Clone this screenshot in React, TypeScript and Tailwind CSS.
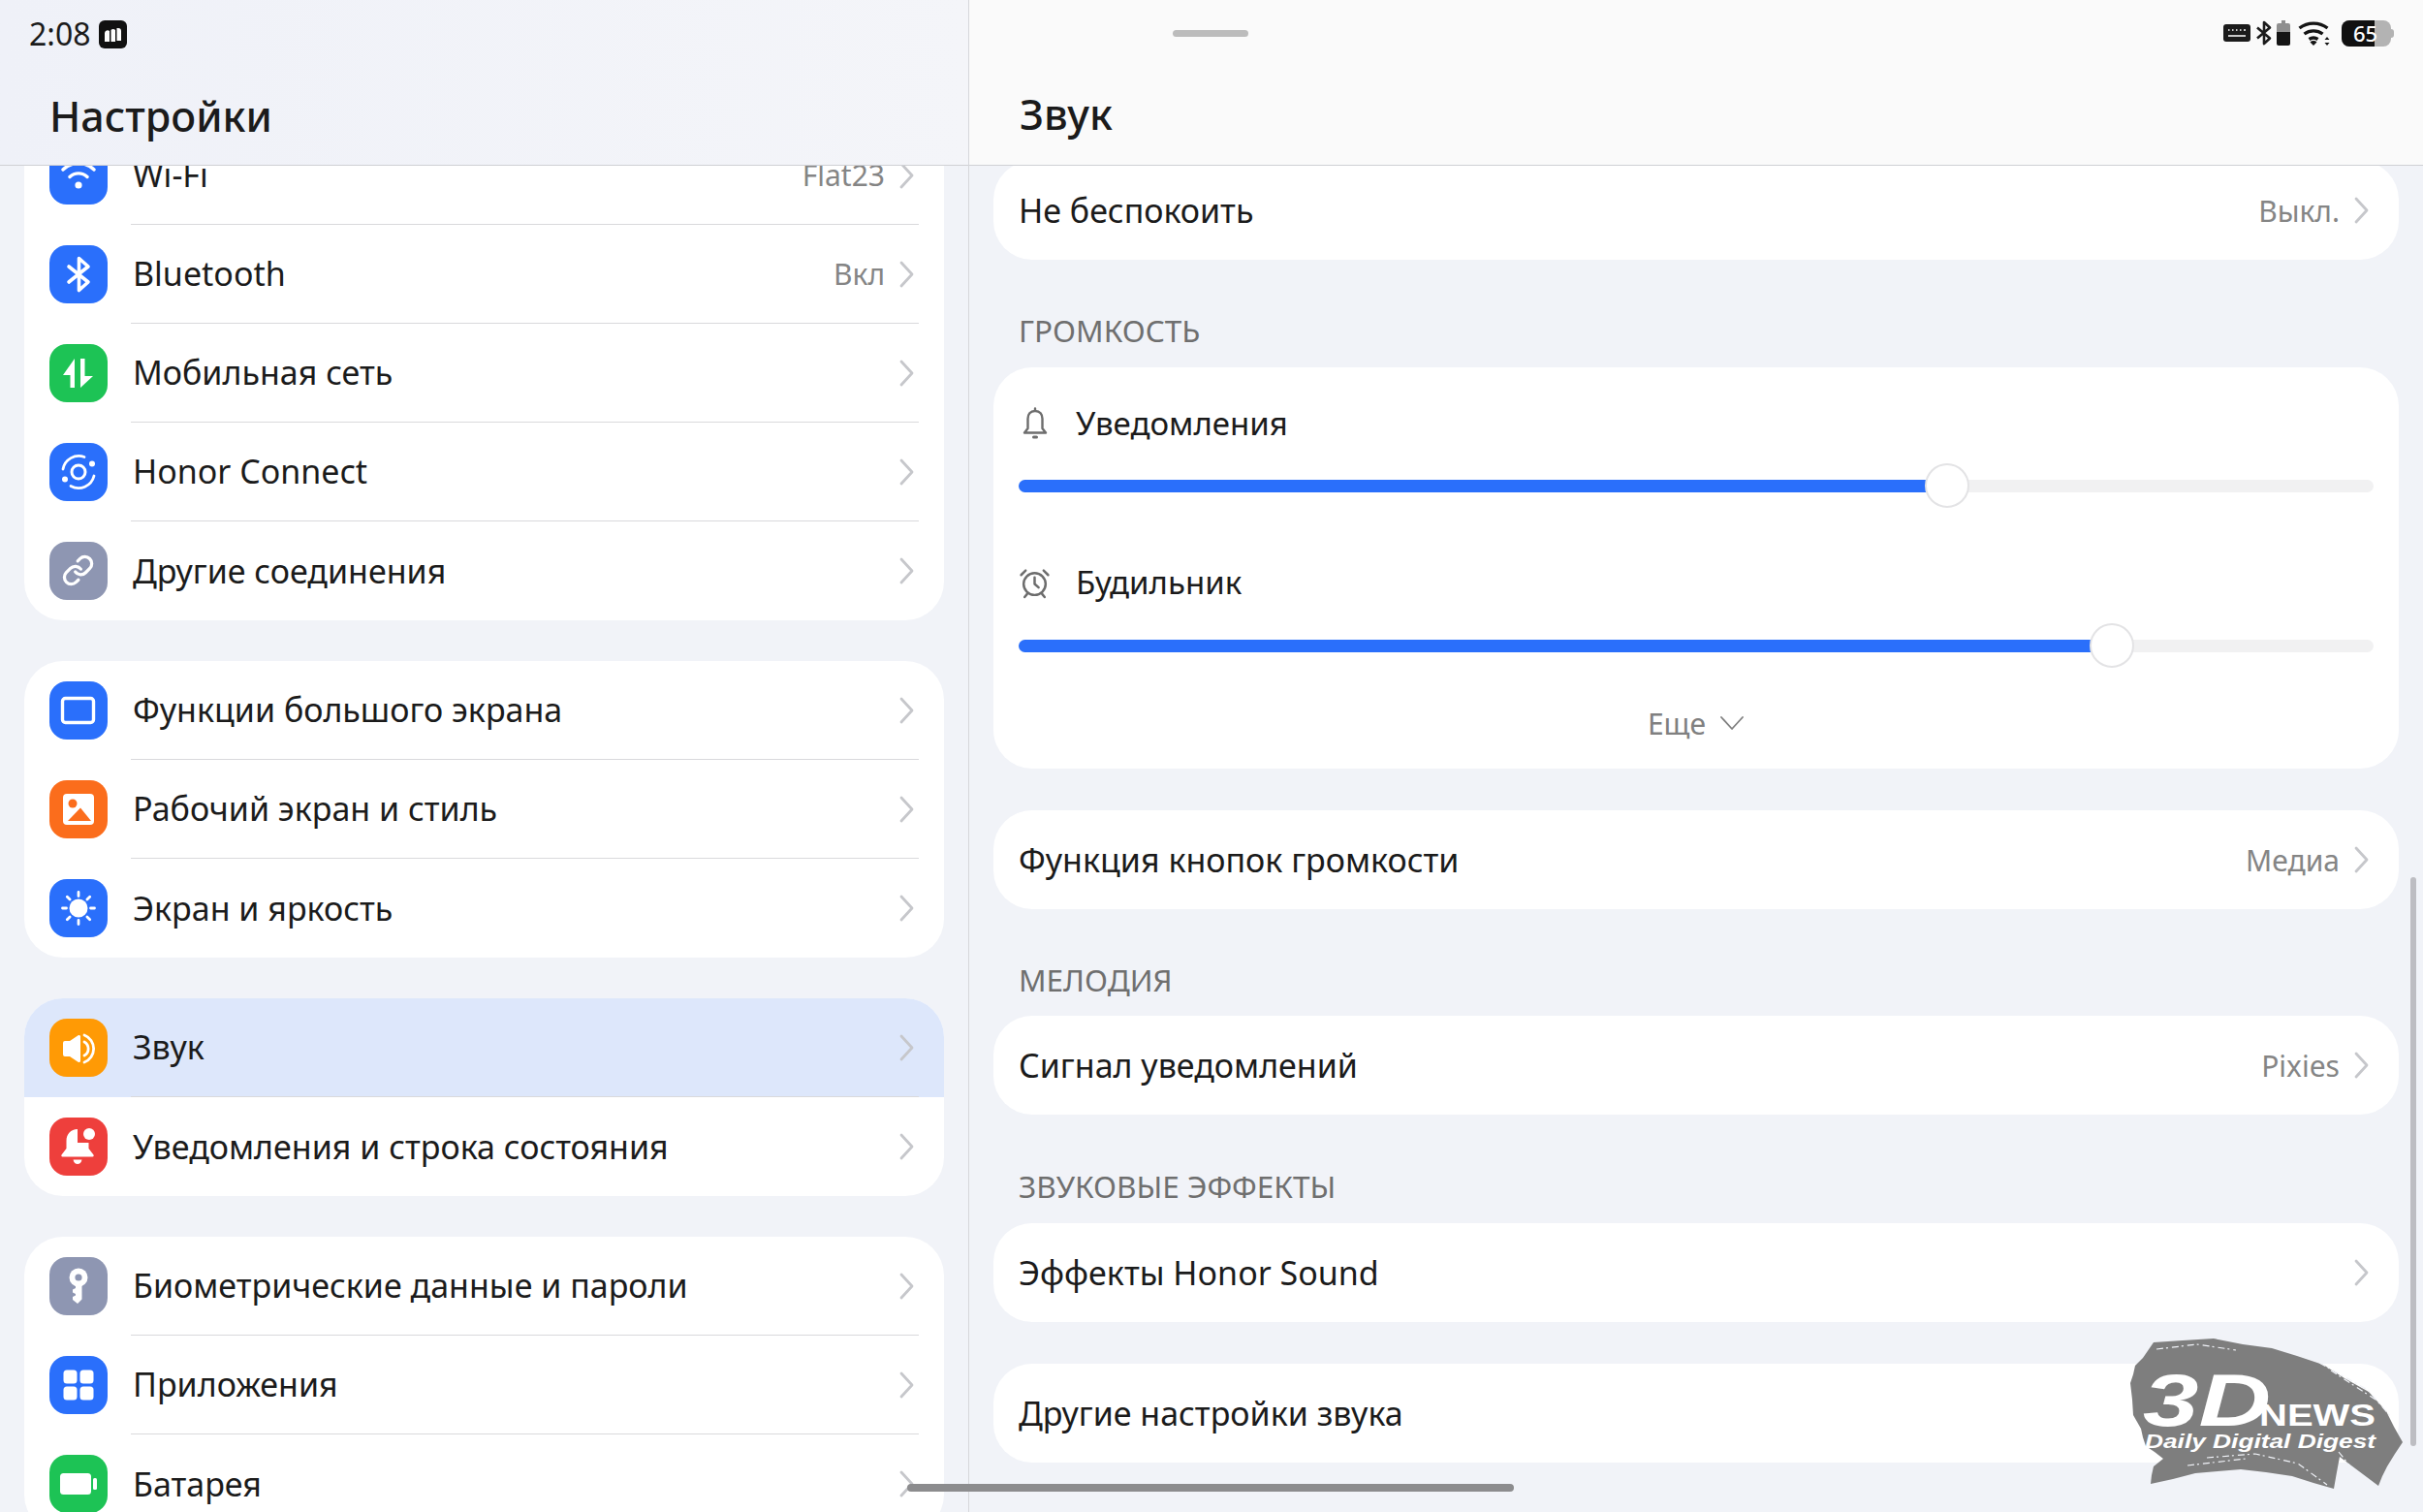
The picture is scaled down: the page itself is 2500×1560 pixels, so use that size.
import React from 'react';

const BLUE = 'bg-[#2a6ffb]';
const GREEN = 'bg-[#1dc355]';
const GRAY = 'bg-[#8e96b2]';

const glyph = (children: React.ReactNode) => (
  <svg viewBox="0 0 60 60" className="w-[60px] h-[60px]" fill="none">
    {children}
  </svg>
);

const icons = {
  wifi: glyph(
    <>
      <circle cx="30" cy="40" r="3.6" fill="#fff" />
      <path d="M21 31.5a13 13 0 0 1 18 0M14 24a23 23 0 0 1 32 0" stroke="#fff" strokeWidth="3.4" strokeLinecap="round" />
    </>,
  ),
  bluetooth: glyph(
    <path d="M20 22l20 16-9.5 8.5v-33L40 22 20 38" stroke="#fff" strokeWidth="3.6" strokeLinecap="round" strokeLinejoin="round" />,
  ),
  mobile: glyph(<path d="M26 15v30h-4.500V32H14zM32 15h4.500v18H45L32 45z" fill="#fff" />),
  honor: glyph(
    <>
      <circle cx="30" cy="30" r="7" stroke="#fff" strokeWidth="3" />
      <path d="M14 27a16.500 16.500 0 0 1 22-12.500M46 34a16.500 16.500 0 0 1-24 10.500" stroke="#fff" strokeWidth="2.800" strokeLinecap="round" />
      <circle cx="44" cy="21.500" r="3" fill="#fff" />
      <circle cx="16" cy="37.500" r="3" fill="#fff" />
    </>,
  ),
  link: glyph(
    <g transform="translate(12.500 12.500) scale(1.42)" stroke="#fff" strokeWidth="2.300" strokeLinecap="round" strokeLinejoin="round">
      <path d="M10 13a5 5 0 0 0 7.540.54l3-3a5 5 0 0 0-7.070-7.070l-1.720 1.710" />
      <path d="M14 11a5 5 0 0 0-7.540-.54l-3 3a5 5 0 0 0 7.070 7.070l1.710-1.710" />
    </g>,
  ),
  screen: glyph(<rect x="13.500" y="17.500" width="32" height="25" rx="3" stroke="#fff" strokeWidth="3.400" />),
  wallpaper: glyph(
    <>
      <rect x="14" y="14" width="32" height="32" rx="4" fill="#fff" />
      <circle cx="24" cy="24" r="4.500" fill="#fb6d1c" />
      <path d="M19 42l13-13.500L43 42z" fill="#fb6d1c" />
    </>,
  ),
  sun: glyph(
    <>
      <circle cx="30" cy="30" r="9.500" fill="#fff" />
      <path
        d="M30 13.500v4M30 42.500v4M13.500 30h4M42.500 30h4M18.300 18.300l2.800 2.800M38.900 38.900l2.800 2.800M18.300 41.700l2.800-2.800M38.900 21.100l2.800-2.800"
        stroke="#fff"
        strokeWidth="2.800"
        strokeLinecap="round"
      />
    </>,
  ),
  sound: glyph(
    <>
      <path d="M14 25a2 2 0 0 1 2-2h5l9-6a1.500 1.500 0 0 1 2 1.500v25a1.500 1.500 0 0 1-2 1.500l-9-6h-5a2 2 0 0 1-2-2z" fill="#fff" />
      <path d="M36 24a8 8 0 0 1 0 14M36 17a15 15 0 0 1 0 28" stroke="#fff" strokeWidth="2.800" strokeLinecap="round" />
    </>,
  ),
  bell: glyph(
    <>
      <path d="M29 12c-7 0-11.500 5-11.500 12v8l-5 6.500c-.5 1 0 2 1 2h31c1 0 1.500-1 1-2l-5-6.500v-6H29z" fill="#fff" />
      <path d="M24.500 43.500h9c-.5 3-2.500 4.500-4.500 4.500s-4-1.500-4.500-4.500z" fill="#fff" />
      <circle cx="41" cy="17" r="8.500" fill="#ee3f3c" />
      <circle cx="41" cy="17" r="6" fill="#fff" />
    </>,
  ),
  key: glyph(
    <>
      <circle cx="30" cy="21" r="9.500" fill="#fff" />
      <circle cx="30" cy="21" r="3.600" fill="#8e96b2" />
      <path d="M27 28h6.500v15.500L29 48l-5-4v-3l3-1.500V38l-3-1.500v-3l3-1.500z" fill="#fff" />
    </>,
  ),
  apps: glyph(
    <>
      <rect x="14.500" y="14.500" width="14" height="14" rx="3.500" fill="#fff" />
      <rect x="31.500" y="14.500" width="14" height="14" rx="3.500" fill="#fff" />
      <rect x="14.500" y="31.500" width="14" height="14" rx="3.500" fill="#fff" />
      <rect x="31.500" y="31.500" width="14" height="14" rx="3.500" fill="#fff" />
    </>,
  ),
  battery: glyph(
    <>
      <rect x="11" y="19" width="32" height="22" rx="3.500" fill="#fff" />
      <rect x="45" y="24" width="4" height="12" rx="1.500" fill="#fff" />
    </>,
  ),
};

type RowData = { icon: keyof typeof icons; color: string; label: string; value?: string; active?: boolean };

const groups: RowData[][] = [
  [
    { icon: 'wifi', color: BLUE, label: 'Wi-Fi', value: 'Flat23' },
    { icon: 'bluetooth', color: BLUE, label: 'Bluetooth', value: 'Вкл' },
    { icon: 'mobile', color: GREEN, label: 'Мобильная сеть' },
    { icon: 'honor', color: BLUE, label: 'Honor Connect' },
    { icon: 'link', color: GRAY, label: 'Другие соединения' },
  ],
  [
    { icon: 'screen', color: BLUE, label: 'Функции большого экрана' },
    { icon: 'wallpaper', color: 'bg-[#fb6d1c]', label: 'Рабочий экран и стиль' },
    { icon: 'sun', color: BLUE, label: 'Экран и яркость' },
  ],
  [
    { icon: 'sound', color: 'bg-[#ff9a05]', label: 'Звук', active: true },
    { icon: 'bell', color: 'bg-[#ee3f3c]', label: 'Уведомления и строка состояния' },
  ],
  [
    { icon: 'key', color: GRAY, label: 'Биометрические данные и пароли' },
    { icon: 'apps', color: BLUE, label: 'Приложения' },
    { icon: 'battery', color: GREEN, label: 'Батарея' },
  ],
];

function Chevron() {
  return (
    <svg viewBox="0 0 15 28" className="w-[15px] h-[28px] shrink-0" fill="none">
      <path d="M2 2l11 12L2 26" stroke="#c6c7cb" strokeWidth="2.800" strokeLinecap="round" strokeLinejoin="round" />
    </svg>
  );
}

function MenuRow({ row, last }: { row: RowData; last: boolean }) {
  return (
    <div className={`flex items-center h-[102px] pl-[26px] pr-[26px] ${row.active ? 'bg-[#dde7fb]' : ''}`}>
      <div className={`w-[60px] h-[60px] rounded-[18px] shrink-0 ${row.color}`}>{icons[row.icon]}</div>
      <div className={`flex items-center flex-1 h-full ml-[24px] pr-[5px] pl-[2px] ${last ? '' : 'border-b border-[#d9d9dc]'}`}>
        <span className="flex-1 text-[34px] text-[#1b1b1b]">{row.label}</span>
        {row.value && <span className="text-[30px] text-[#858585] mr-[15px]">{row.value}</span>}
        <Chevron />
      </div>
    </div>
  );
}

function SoundRow({ label, value, className = '' }: { label: string; value?: string; className?: string }) {
  return (
    <div className={`flex items-center h-[102px] pl-[26px] pr-[31px] bg-white rounded-[40px] ${className}`}>
      <span className="flex-1 text-[34px] text-[#1b1b1b]">{label}</span>
      {value && <span className="text-[30px] text-[#858585] mr-[15px]">{value}</span>}
      <Chevron />
    </div>
  );
}

function SectionLabel({ text }: { text: string }) {
  return <div className="flex items-center h-[60px] pl-[26px] text-[31.5px] text-[#6f6f6f]">{text}</div>;
}

function VolumeSlider({ percent }: { percent: number }) {
  return (
    <div className="relative h-[13px] rounded-full bg-[#f1f1f2]">
      <div className="h-full rounded-full bg-[#2a6ffb]" style={{ width: `${percent}%` }} />
      <div
        className="absolute top-[-17px] ml-[-23px] w-[46px] h-[46px] rounded-full bg-white border-2 border-[#e3e3e5]"
        style={{ left: `${percent}%` }}
      />
    </div>
  );
}

function BellOutline() {
  return (
    <svg viewBox="0 0 30 34" className="w-[30px] h-[34px] ml-[2px]" fill="none" stroke="#6d6d6d" strokeWidth="2.400" strokeLinecap="round" strokeLinejoin="round">
      <path d="M15 4c-5 0-7.500 3.500-7.500 8v10L4 26.500h22L22.500 22V12c0-4.500-2.500-8-7.500-8zM15 1.500V4" />
      <path d="M13.500 31h3" strokeWidth="3" />
    </svg>
  );
}

function AlarmOutline() {
  return (
    <svg viewBox="0 0 32 32" className="w-[33px] h-[33px]" fill="none" stroke="#6d6d6d" strokeWidth="2.400" strokeLinecap="round" strokeLinejoin="round">
      <circle cx="16" cy="17" r="11" />
      <path d="M16 10.500V17l4 3.500M2.500 8L7 3.500M29.500 8L25 3.500M6 30l2.500-3M26 30l-2.500-3" />
    </svg>
  );
}

function StatusIcons() {
  return (
    <div className="flex items-center ml-auto mr-[30px]">
      <svg viewBox="0 0 28 18" className="w-[28px] h-[18px]">
        <rect width="28" height="18" rx="3" fill="#1b1b1b" />
        <path d="M5 6h1.500M9 6h1.500M13 6h1.500M17 6h1.500M21 6h2M5 12h18" stroke="#fff" strokeWidth="1.600" />
      </svg>
      <svg viewBox="0 0 18 26" className="w-[18px] h-[26px] ml-[5px]" fill="none">
        <path d="M2 7.500l13 11L9 24V2l6 5.500-13 11" stroke="#1b1b1b" strokeWidth="2.600" strokeLinejoin="round" />
      </svg>
      <svg viewBox="0 0 14 26" className="w-[14px] h-[26px] ml-[4px]">
        <path d="M5 0h4v3h3a2 2 0 0 1 2 2v8H0V5a2 2 0 0 1 2-2h3z" fill="#8f8f8f" />
        <path d="M0 12h14v12a2 2 0 0 1-2 2H2a2 2 0 0 1-2-2z" fill="#141414" />
      </svg>
      <svg viewBox="0 0 35 26" className="w-[35px] h-[26px] ml-[8px]" fill="none">
        <path d="M1.500 8a24 24 0 0 1 29 0M6.500 14a16 16 0 0 1 19 0M11.500 19.500a8 8 0 0 1 9 0" stroke="#141414" strokeWidth="3.400" />
        <path d="M16 26l-3.500-3.500a5 5 0 0 1 7 0z" fill="#141414" />
        <path d="M30 17l2.500 3h-5zM30 26l2.500-3h-5z" fill="#141414" />
      </svg>
      <div className="relative flex w-[51px] h-[27px] ml-[10px] rounded-[8px] overflow-hidden bg-[#b3b3b3]">
        <div className="w-[34px] h-full bg-[#111111]" />
        <span className="absolute left-[12px] top-0 text-[22px] leading-[27px] font-medium text-white">65</span>
      </div>
      <div className="w-[3px] h-[9px] rounded-r-full bg-[#b3b3b3]" />
    </div>
  );
}

function Watermark() {
  return (
    <svg viewBox="0 0 290 165" className="absolute left-[2197px] top-[1378px] w-[290px] h-[165px]">
      <path
        d="M25 7l30-2 32-2 30 6 30 4 26 8 27 9 22 14 25 14 9 10 9 10 8 16 9 16-8 12-8 13-5 10-4 10-20-15-20-15-3 16-3 17-21-6-22-7-27-4-26-3-24 2-23 2-23 6-23 5 1-9 2-9 10-8-9-7-9-6-3-9-2-9-4-7-4-7-1-16-2-17 3-9 2-9 8-8z"
        fill="#7a7a7a"
        fillOpacity="0.97"
      />
      <g stroke="#f1f3f8" strokeWidth="1.200" strokeDasharray="7 3 2 4" fill="none">
        <path d="M28 14l42-5 40 6" />
        <path d="M196 28l50 28 24 28" />
        <path d="M208 36l46 30" />
        <path d="M80 126l50-4 44 10 30 22" />
        <path d="M60 134l60-7" />
        <path d="M216 120l24 30" />
      </g>
      <text x="14" y="93" fill="#fff" fontFamily="Liberation Sans, sans-serif" fontWeight="700" fontStyle="italic" fontSize="76" textLength="132" lengthAdjust="spacingAndGlyphs">
        3D
      </text>
      <text x="134" y="93" fill="#fff" fontFamily="Liberation Sans, sans-serif" fontWeight="700" fontSize="31" textLength="120" lengthAdjust="spacingAndGlyphs">
        NEWS
      </text>
      <text x="16" y="116" fill="#fff" fontFamily="Liberation Sans, sans-serif" fontWeight="700" fontStyle="italic" fontSize="21" textLength="238" lengthAdjust="spacingAndGlyphs">
        Daily Digital Digest
      </text>
    </svg>
  );
}

export default function App() {
  return (
    <div className="relative flex w-[2500px] h-[1560px] overflow-hidden bg-[#f1f3f8] font-['Noto_Sans',sans-serif]">
      <aside className="flex flex-col w-[1000px] h-full shrink-0 border-r border-[#d6d7db]">
        <header className="relative z-10 h-[171px] shrink-0 bg-linear-to-r from-[#eff1f8] to-[#f4f5f9] border-b border-[#cfd0d4]">
          <div className="flex items-center h-[70px] pl-[30px]">
            <span className="text-[32px] text-[#1b1b1b]">2:08</span>
            <svg viewBox="0 0 29 29" className="w-[29px] h-[29px] ml-[8px]">
              <rect width="29" height="29" rx="6" fill="#111111" />
              <path d="M6 13a3 3 0 0 1 5-2v11H6zM12.500 10a3 3 0 0 1 4.500 0v12h-4.500zM18.500 8h1.500a3 3 0 0 1 3 3v10h-4.500z" fill="#fff" />
            </svg>
          </div>
          <h1 className="flex items-center h-[100px] pl-[51px] text-[43px] font-medium text-[#1b1b1b]">Настройки</h1>
        </header>
        <div className="flex-1 min-h-0 overflow-hidden">
          <div className="flex flex-col gap-[42px] px-[25px] mt-[-41px]">
            {groups.map((group, i) => (
              <div key={i} className="bg-white rounded-[40px] overflow-hidden">
                {group.map((row, j) => (
                  <MenuRow key={row.label} row={row} last={j === group.length - 1} />
                ))}
              </div>
            ))}
          </div>
        </div>
      </aside>

      <main className="flex flex-col flex-1 h-full min-w-0">
        <header className="relative z-10 h-[171px] shrink-0 bg-[#fafafa] border-b border-[#cfd0d4]">
          <div className="flex items-center h-[68px]">
            <div className="w-[78px] h-[7px] ml-[210px] rounded-full bg-[#bcbcbc]" />
            <StatusIcons />
          </div>
          <h2 className="flex items-center h-[100px] pl-[52px] text-[43px] font-medium text-[#1b1b1b]">Звук</h2>
        </header>
        <div className="flex-1 min-h-0 overflow-hidden">
          <div className="flex flex-col px-[25px] mt-[-5px]">
            <SoundRow label="Не беспокоить" value="Выкл." />
            <div className="mt-[43px] mb-[8px]">
              <SectionLabel text="ГРОМКОСТЬ" />
            </div>
            <div className="flex flex-col h-[414px] px-[26px] pt-[28px] bg-white rounded-[40px]">
              <div className="flex items-center h-[60px]">
                <div className="w-[59px] shrink-0">
                  <BellOutline />
                </div>
                <span className="text-[33px] text-[#1b1b1b]">Уведомления</span>
              </div>
              <div className="mt-[28px]">
                <VolumeSlider percent={68.500} />
              </div>
              <div className="flex items-center h-[60px] mt-[63px]">
                <div className="w-[59px] shrink-0">
                  <AlarmOutline />
                </div>
                <span className="text-[33px] text-[#1b1b1b]">Будильник</span>
              </div>
              <div className="mt-[29px]">
                <VolumeSlider percent={80.700} />
              </div>
              <div className="flex items-center justify-center gap-[14px] h-[40px] mt-[53px] text-[30px] text-[#808080]">
                <span>Еще</span>
                <svg viewBox="0 0 26 16" className="w-[26px] h-[16px]" fill="none">
                  <path d="M2 2l11 12L24 2" stroke="#808080" strokeWidth="1.800" strokeLinecap="round" strokeLinejoin="round" />
                </svg>
              </div>
            </div>
            <SoundRow label="Функция кнопок громкости" value="Медиа" className="mt-[43px]" />
            <div className="mt-[43px] mb-[7px]">
              <SectionLabel text="МЕЛОДИЯ" />
            </div>
            <SoundRow label="Сигнал уведомлений" value="Pixies" />
            <div className="mt-[44px] mb-[8px]">
              <SectionLabel text="ЗВУКОВЫЕ ЭФФЕКТЫ" />
            </div>
            <SoundRow label="Эффекты Honor Sound" />
            <SoundRow label="Другие настройки звука" className="mt-[43px]" />
          </div>
        </div>
      </main>

      <div className="absolute left-[2487px] top-[905px] w-[6px] h-[587px] rounded-full bg-[#bdbdc2]" />
      <div className="absolute left-[936px] top-[1531px] w-[626px] h-[8px] rounded-full bg-[#8c8c8e]" />
      <Watermark />
    </div>
  );
}
